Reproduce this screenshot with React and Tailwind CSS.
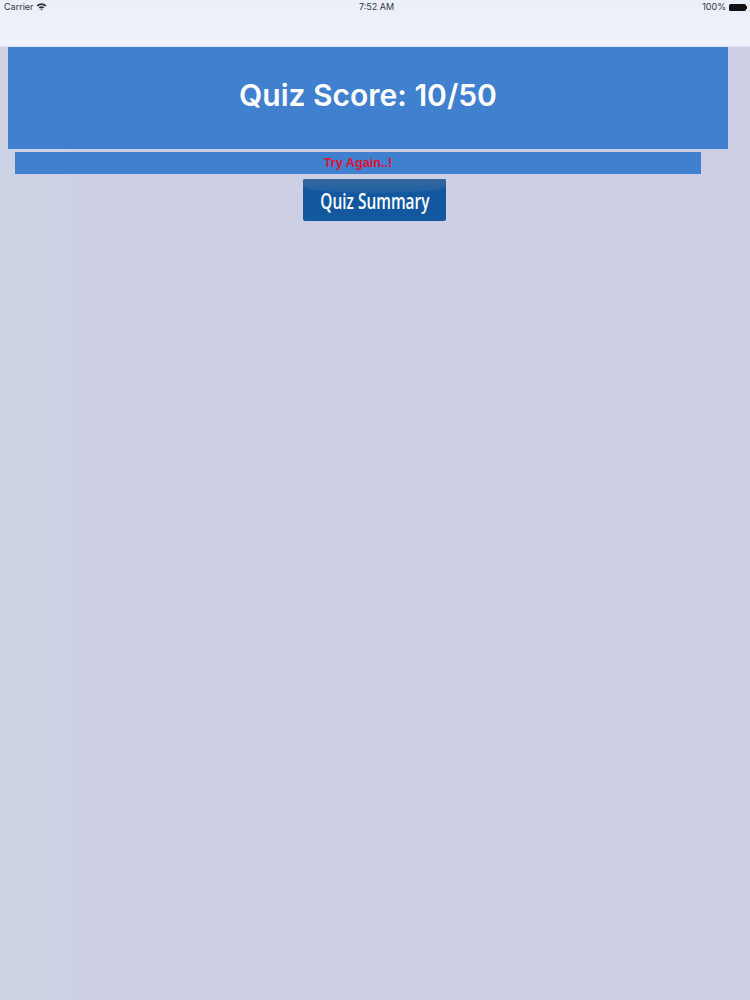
import React from "react";

function Wifi() {
  return (
    <svg width="11" height="9" viewBox="0 0 22 16" className="ml-[2px] -mt-[1px]">
      <path d="M1 5.5 Q11 -3 21 5.5 L18.6 8 Q11 2 3.4 8 Z" fill="#2a2d33" />
      <path d="M5.4 9.6 Q11 5 16.6 9.6 L14.4 12 Q11 9.6 7.6 12 Z" fill="#2a2d33" />
      <path d="M9 13.4 Q11 12 13 13.4 L11 16 Z" fill="#2a2d33" />
    </svg>
  );
}

function Battery() {
  return (
    <div className="flex items-center ml-[3px]">
      <div className="w-[17px] h-[7px] bg-[#111] rounded-[1.5px]" />
      <div className="w-[1px] h-[3px] bg-[#111]" />
    </div>
  );
}

function StatusBar() {
  return (
    <div className="h-[47px] bg-gradient-to-b from-[#ebeff8] to-[#eef2fa] border-b border-[#dfe5f0] shrink-0">
      <div className="grid grid-cols-3 items-center h-[14px] px-[3px] text-[9px] leading-[14px] text-[#33363c]">
        <div className="flex items-center pl-[1px]">
          Carrier
          <Wifi />
        </div>
        <div className="text-center pl-[3px]">7:52 AM</div>
        <div className="flex items-center justify-end">
          100%
          <Battery />
        </div>
      </div>
    </div>
  );
}

export default function App() {
  return (
    <div
      className="w-[750px] h-[1000px] overflow-hidden flex flex-col bg-[#cdd0e5]"
      style={{ fontFamily: "Inter, 'Liberation Sans', sans-serif" }}
    >
      <StatusBar />
      <div className="flex-1 flex flex-col bg-gradient-to-r from-[#ccd2e3] to-[#cdd0e5] to-[12%]">
        <div className="ml-[8px] mr-[22px] h-[102px] pb-[6px] flex items-center justify-center bg-[#417fcf]">
          <h1 className="text-[30px] font-semibold text-white">Quiz Score: 10/50</h1>
        </div>
        <div className="mt-[3px] ml-[15px] mr-[49px] h-[22px] pt-[2px] flex items-center justify-center bg-[#417fcf]">
          <span
            className="text-[12.7px] font-bold text-[#e0102f]"
            style={{ fontFamily: "'Liberation Sans', sans-serif" }}
          >
            Try Again..!
          </span>
        </div>
        <div className="flex justify-center mt-[5px] pr-[1px]">
          <button
            className="relative w-[143px] h-[42px] rounded-[2px] overflow-hidden bg-[#13589f] text-white text-[22px] leading-none flex items-center justify-center"
            style={{ fontFamily: "'Open Sans', sans-serif" }}
          >
            <span className="absolute left-0 right-0 top-0 h-[14px] bg-gradient-to-b from-[#33689e] to-[#1f5fa3] rounded-b-[50%]" />
            <span className="relative font-semibold scale-x-[0.7] whitespace-nowrap">Quiz Summary</span>
          </button>
        </div>
      </div>
    </div>
  );
}
